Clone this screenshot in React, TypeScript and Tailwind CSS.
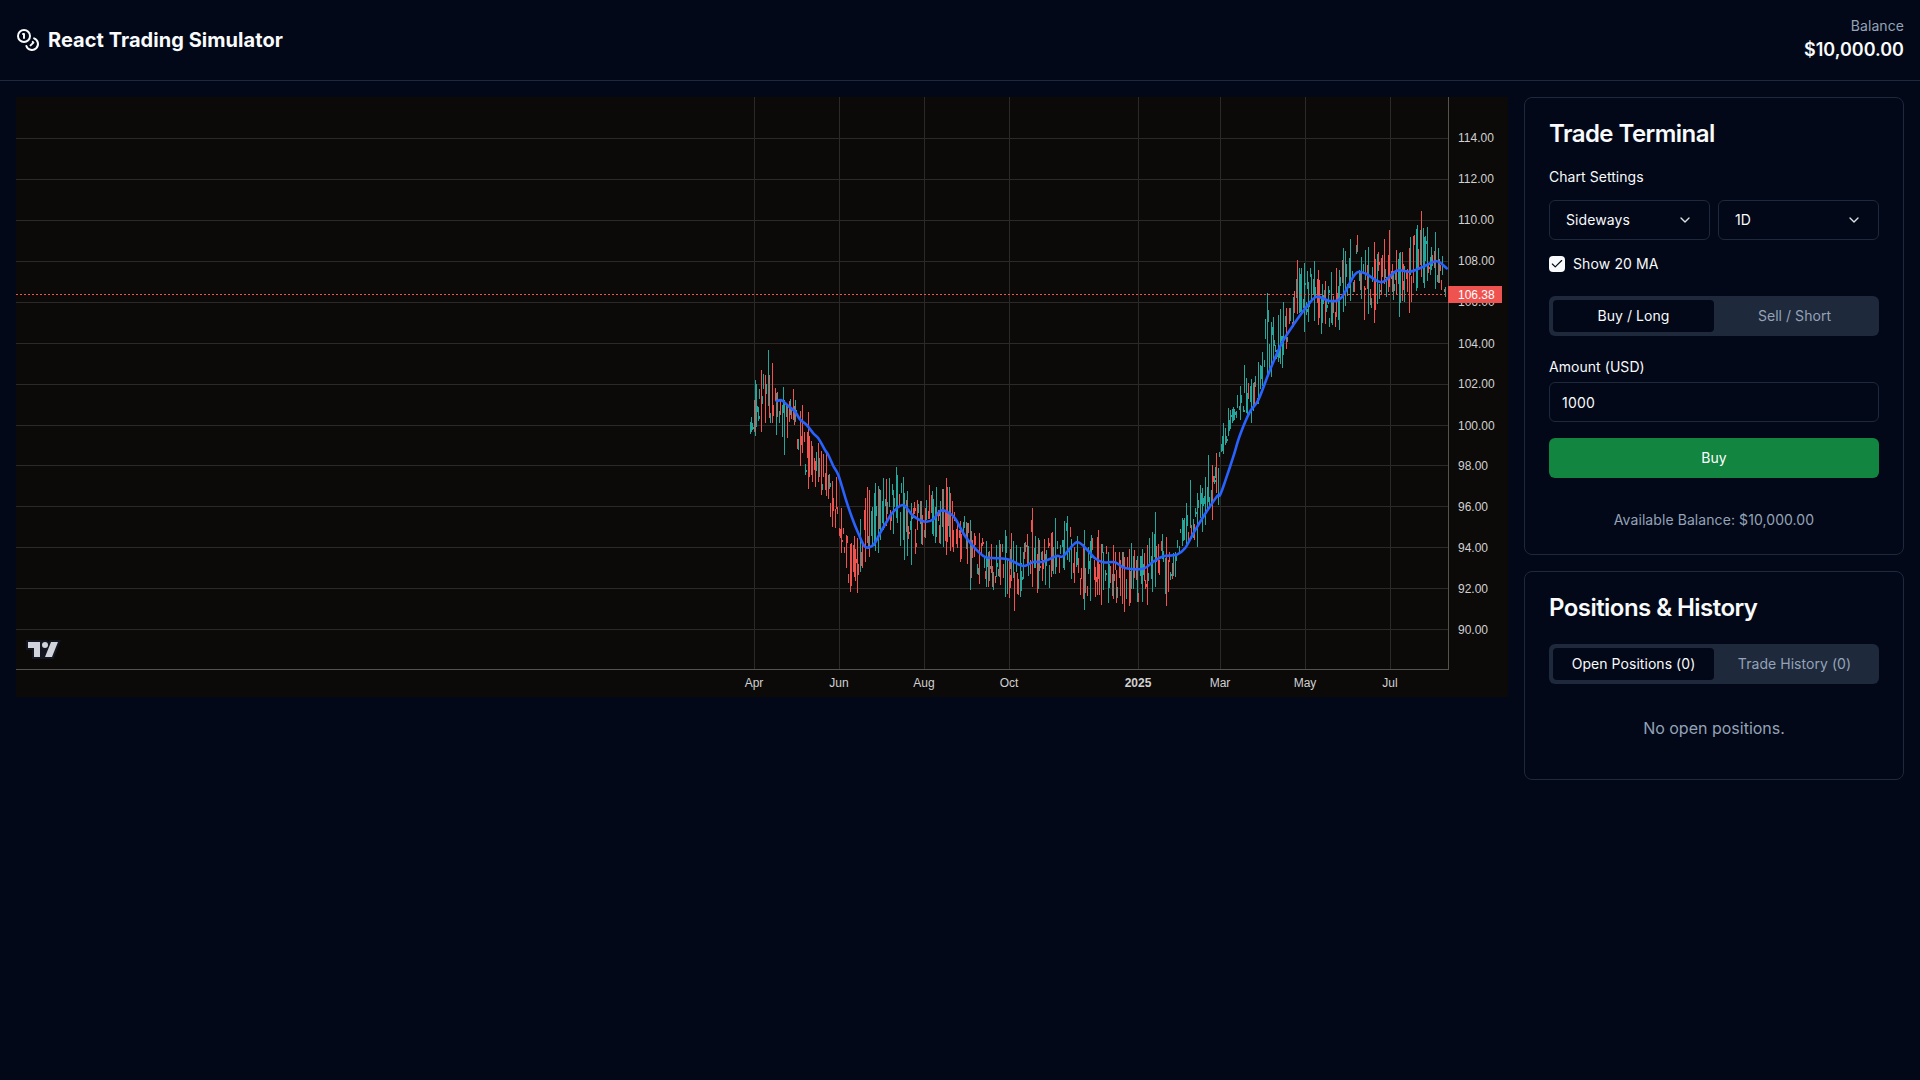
import { Check, ChevronDown, Coins } from "lucide-react";

type Pt = [number, number];

const crop = (ox: number, oy: number, pts: number[]): Pt[] => {
  const out: Pt[] = [];
  for (let i = 0; i < pts.length; i += 2) out.push([ox + pts[i] / 3, oy + pts[i + 1] / 3]);
  return out;
};

const maPts: Pt[] = [
  ...crop(730, 330, [140,213,155,211,175,228,195,245,210,268,230,285,250,310,265,325,285,360,295,375,310,408,325,435,345,500,365,560,385,610,405,650,430,645,450,610,470,575,490,545,520,525,550,558,585,575,610,568,630,543,650,545,675,565,710,625,760,678,790,684]),
  ...crop(1000, 480, [0,235,30,240,70,258,100,246,130,245,170,228,190,228,230,187,260,208,285,235,310,247,345,247,375,264,430,266,460,245,490,229,530,224,555,205,580,160,610,110,650,50]),
  ...crop(1200, 180, [60,945,75,905,100,830,120,765,150,695,175,660,210,570,245,490,280,435,320,380,350,350,390,363,425,352,465,283,495,280,545,307,590,272,630,275,670,260,710,244,740,265]),
];

const hiPts: Pt[] = [
  ...crop(730, 330, [60,275,75,150,95,120,115,60,125,100,145,185,160,170,190,178,220,225,235,245,265,340,290,370,320,440,335,535,365,640,410,470,435,460,460,445,500,410,520,440,560,510,600,465,650,445,720,570,750,610]),
  ...crop(1000, 480, [0,180,15,150,35,160,60,200,97,85,120,180,165,115,205,108,255,150,295,150,340,195,395,190,440,195,468,95,500,170,525,215,545,115,572,0]),
  ...crop(1200, 180, [18,890,25,825,50,820,70,730,85,685,100,680,135,555,145,610,175,545,190,515,200,338,220,410,250,365,270,385,292,240,315,250,343,243,410,265,430,205,450,178,472,165,525,185,568,150,590,210,630,170,664,93,705,155,727,228,740,320]),
];

const loPts: Pt[] = [
  ...crop(730, 330, [60,312,75,318,95,305,105,280,140,315,165,375,210,410,235,475,275,495,305,590,335,670,360,785,380,790,400,715,445,670,470,590,525,690,545,705,580,645,650,675,690,695,720,780,790,780]),
  ...crop(1000, 480, [15,350,45,395,60,350,110,340,150,325,195,270,255,390,302,375,325,368,350,370,373,395,440,375,458,338,502,378,525,290,545,200,590,200,610,155,640,120,655,75]),
  ...crop(1200, 180, [50,930,85,770,105,720,120,720,157,730,175,670,215,590,248,562,280,440,316,458,355,435,365,460,418,450,450,365,495,420,522,428,560,350,600,410,628,397,675,323,706,325,740,350]),
];

const interp = (pts: Pt[], x: number) => {
  if (x <= pts[0][0]) return pts[0][1];
  for (let i = 1; i < pts.length; i++) {
    if (x <= pts[i][0]) {
      const [x0, y0] = pts[i - 1];
      const [x1, y1] = pts[i];
      return y0 + ((y1 - y0) * (x - x0)) / (x1 - x0 || 1);
    }
  }
  return pts[pts.length - 1][1];
};

const smoothPath = (pts: Pt[]) => {
  let d = `M${pts[0][0].toFixed(1)} ${pts[0][1].toFixed(1)}`;
  for (let i = 0; i < pts.length - 1; i++) {
    const p0 = pts[Math.max(i - 1, 0)];
    const p1 = pts[i];
    const p2 = pts[i + 1];
    const p3 = pts[Math.min(i + 2, pts.length - 1)];
    const c1x = p1[0] + (p2[0] - p0[0]) / 6;
    const c1y = p1[1] + (p2[1] - p0[1]) / 6;
    const c2x = p2[0] - (p3[0] - p1[0]) / 6;
    const c2y = p2[1] - (p3[1] - p1[1]) / 6;
    d += `C${c1x.toFixed(1)} ${c1y.toFixed(1)} ${c2x.toFixed(1)} ${c2y.toFixed(1)} ${p2[0].toFixed(1)} ${p2[1].toFixed(1)}`;
  }
  return d;
};

let seed = 20250101;
const rnd = () => {
  seed = (seed * 1664525 + 1013904223) >>> 0;
  return seed / 4294967296;
};

type Bar = { x: number; top: number; bot: number; bt: number; bh: number; bw: number; up: boolean };

const barIndex = (x: number) => Math.max(0, Math.min(499, Math.round((x - 750) / 1.3936)));

const bars: Bar[] = [];
for (let i = 0; i < 500; i++) {
  const x = 750 + i * 1.3936;
  const hi = interp(hiPts, x);
  const lo = interp(loPts, x);
  const span = (lo - hi) * 0.88;
  const len = span * (0.14 + 0.86 * Math.pow(rnd(), 2.2));
  const start = hi + (lo - hi - span) / 2 + (span - len) * rnd();
  const up = rnd() < 0.5 - (interp(maPts, x + 8) - interp(maPts, x - 8)) * 0.012;
  const a = start + len * (0.2 + rnd() * 0.4);
  const bh = Math.max(2, len * (0.08 + rnd() * 0.24));
  bars.push({
    x: Math.floor(x),
    top: start,
    bot: start + Math.max(2, len),
    bt: Math.round(a),
    bh: Math.round(bh),
    bw: rnd() < 0.2 ? 2 : 1,
    up,
  });
}
hiPts.forEach(([x, y]) => {
  bars[barIndex(x)].top = y;
});
loPts.forEach(([x, y]) => {
  bars[barIndex(x)].bot = y;
});

const priceLabels = ["114.00", "112.00", "110.00", "108.00", "106.00", "104.00", "102.00", "100.00", "98.00", "96.00", "94.00", "92.00", "90.00"];
const priceY = priceLabels.map((_, i) => Math.floor(138.7 + 40.9 * i));
const priceTextOffset = [4, 4, 4, 4, 4, 5, 4, 5, 5, 5, 5, 5, 5];
const timeLabels: [string, number, boolean][] = [
  ["Apr", 754, false],
  ["Jun", 839, false],
  ["Aug", 924, false],
  ["Oct", 1009, false],
  ["2025", 1138, true],
  ["Mar", 1220, false],
  ["May", 1305, false],
  ["Jul", 1390, false],
];

function Chart() {
  return (
    <svg viewBox="16 97 1492 600" width={1492} height={600} className="block font-['Liberation_Sans',sans-serif] text-[12px]">
      <rect x={16} y={97} width={1492} height={600} fill="#0b0a08" />
      {priceY.map((y) => (
        <rect key={y} x={16} y={y} width={1432} height={1} fill="#2b2a28" />
      ))}
      {timeLabels.map(([t, x]) => (
        <rect key={t} x={x} y={97} width={1} height={572} fill="#2b2a28" />
      ))}
      <g shapeRendering="crispEdges">
        {bars.map((b, i) => (
          <g key={i} fill={b.up ? "#26a69a" : "#ef5350"}>
            <rect x={b.x} y={Math.round(b.top)} width={1} height={Math.max(2, Math.round(b.bot - b.top))} />
            <rect x={b.x} y={b.bt} width={b.bw} height={b.bh} />
          </g>
        ))}
      </g>
      <path d={smoothPath(maPts)} fill="none" stroke="#2962ff" strokeWidth={2.6} strokeLinejoin="round" strokeLinecap="round" />
      <line x1={16} x2={1448} y1={294.5} y2={294.5} stroke="#ef5350" strokeWidth={1} strokeDasharray="2 2" />
      <rect x={1448} y={97} width={1} height={572} fill="#555350" />
      <rect x={16} y={669} width={1433} height={1} fill="#555350" />
      {priceLabels.map((p, i) => (
        <text key={p} x={1458} y={priceY[i] + priceTextOffset[i]} fill="#d1d1d1">
          {p}
        </text>
      ))}
      {timeLabels.map(([t, x, bold]) => (
        <text key={t} x={x} y={686.5} fill="#d1d1d1" textAnchor="middle" fontWeight={bold ? 700 : 400}>
          {t}
        </text>
      ))}
      <rect x={1448} y={286} width={54} height={17} fill="#ef5350" />
      <text x={1458} y={299} fill="#ffffff">
        106.38
      </text>
      <svg x={26} y={640} width={35} height={19} viewBox="0 0 35 19" fill="none">
        <path fillRule="evenodd" clipRule="evenodd" fill="#131722" d="M2 0H0v10h6v9h21.4l.5-1.3 6-15 1-2.7H23.7l-.5 1.3-.2.6a5 5 0 0 0-7-.9V0H2Zm20 17h4l5.2-13 .8-2h-7l-1 2.5-.2.5-1.5 3.8-.3.7V17Zm-.8-10a3 3 0 0 0 .7-2.7A3 3 0 1 0 16.8 7h4.4ZM14 7V2H2v6h6v9h4V7h2Z" />
        <path fillRule="evenodd" clipRule="evenodd" fill="#d1d4dc" d="M14 2H2v6h6v9h6V2Zm12 15h-7l6-15h7l-6 15Zm-7-9a3 3 0 1 0 0-6 3 3 0 0 0 0 6Z" />
      </svg>
    </svg>
  );
}

function Select({ label }: { label: string }) {
  return (
    <button className="flex h-10 flex-1 items-center justify-between rounded-md border border-[#1e293b] bg-[#020817] px-4 text-sm tracking-[0.08px] text-[#f8fafc]">
      <span>{label}</span>
      <ChevronDown className="h-4 w-4 opacity-90" />
    </button>
  );
}

function Tabs({ active, other }: { active: string; other: string }) {
  return (
    <div className="grid h-10 grid-cols-2 items-center rounded-md bg-[#1e293b] p-1 text-sm tracking-[0.05px]">
      <div className="flex h-8 items-center justify-center rounded-sm bg-[#020817] text-[#f8fafc]">{active}</div>
      <div className="flex h-8 items-center justify-center text-[#94a3b8]">{other}</div>
    </div>
  );
}

function CardTitle({ children }: { children: string }) {
  return <h2 className="text-2xl leading-none font-semibold tracking-[-0.55px] text-[#f8fafc]">{children}</h2>;
}

export default function App() {
  return (
    <div className="min-h-screen bg-[#020817] font-['Inter',sans-serif] text-[#f8fafc]">
      <header className="flex h-[81px] items-center justify-between border-b border-[#1e293b] px-4">
        <div className="flex items-center gap-2">
          <Coins className="h-6 w-6" />
          <h1 className="text-xl font-bold tracking-[0.05px]">React Trading Simulator</h1>
        </div>
        <div className="text-right">
          <div className="text-sm tracking-[0.08px] text-[#94a3b8]">Balance</div>
          <div className="text-lg leading-7 font-semibold">$10,000.00</div>
        </div>
      </header>
      <main className="grid grid-cols-[1fr_380px] items-start gap-4 p-4">
        <div className="h-[600px]">
          <Chart />
        </div>
        <div className="flex flex-col gap-4">
          <section className="rounded-lg border border-[#1e293b] bg-[#020817] p-6">
            <CardTitle>Trade Terminal</CardTitle>
            <div className="mt-6 text-sm leading-none tracking-[0.05px]">Chart Settings</div>
            <div className="mt-4 flex gap-2">
              <Select label="Sideways" />
              <Select label="1D" />
            </div>
            <div className="mt-4 flex items-center gap-2">
              <span className="flex h-4 w-4 items-center justify-center rounded-sm bg-[#f8fafc] text-[#020817]">
                <Check className="h-3.5 w-3.5" strokeWidth={2} />
              </span>
              <span className="text-sm leading-none tracking-[0.12px]">Show 20 MA</span>
            </div>
            <div className="mt-6">
              <Tabs active="Buy / Long" other="Sell / Short" />
            </div>
            <div className="mt-6 text-sm leading-none tracking-[0.05px]">Amount (USD)</div>
            <input
              readOnly
              value="1000"
              className="mt-2 block h-10 w-full rounded-md border border-[#1e293b] bg-[#020817] px-3 text-sm tracking-[0.2px] text-[#f8fafc] outline-none"
            />
            <button className="mt-4 flex h-10 w-full items-center justify-center rounded-md bg-[#128540] text-sm tracking-[0.05px] text-white">Buy</button>
            <div className="mt-8 text-center text-sm tracking-[0.08px] text-[#94a3b8]">Available Balance: $10,000.00</div>
          </section>
          <section className="rounded-lg border border-[#1e293b] bg-[#020817] p-6">
            <CardTitle>Positions & History</CardTitle>
            <div className="mt-6">
              <Tabs active="Open Positions (0)" other="Trade History (0)" />
            </div>
            <div className="mt-8 mb-[15px] text-center text-base text-[#94a3b8]">No open positions.</div>
          </section>
        </div>
      </main>
    </div>
  );
}
